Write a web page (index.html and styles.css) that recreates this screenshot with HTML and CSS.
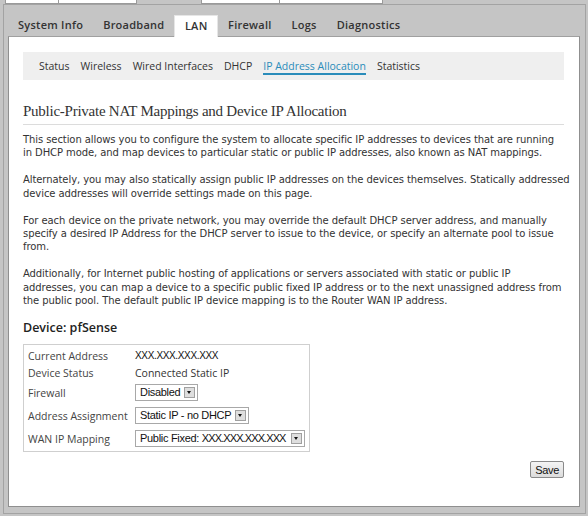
FILE: index.html
```html
<!DOCTYPE html>
<html>
<head>
<meta charset="utf-8">
<link rel="stylesheet" href="styles.css">
</head>
<body>
<div class="topstrip">
  <div class="cell c1"></div>
  <div class="cell c2"></div>
  <div class="gapcell"></div>
  <div class="cell c3"></div>
  <div class="cell c4"></div>
</div>
<div class="frame">
  <div class="tabs">
    <div class="tab">System Info</div>
    <div class="tab">Broadband</div>
    <div class="tab active">LAN</div>
    <div class="tab">Firewall</div>
    <div class="tab">Logs</div>
    <div class="tab">Diagnostics</div>
  </div>
  <div class="panel">
    <div class="subnav">
      <span class="sub">Status</span>
      <span class="sub">Wireless</span>
      <span class="sub">Wired Interfaces</span>
      <span class="sub">DHCP</span>
      <span class="sub current">IP Address Allocation</span>
      <span class="sub">Statistics</span>
    </div>
    <h1 class="title">Public-Private NAT Mappings and Device IP Allocation</h1>
    <div class="intro">
      <p class="para">This section allows you to configure the system to allocate specific IP addresses to devices that are running<br>in DHCP mode, and map devices to particular static or public IP addresses, also known as NAT mappings.</p>
      <p class="para">Alternately, you may also statically assign public IP addresses on the devices themselves. Statically addressed<br>device addresses will override settings made on this page.</p>
      <p class="para">For each device on the private network, you may override the default DHCP server address, and manually<br>specify a desired IP Address for the DHCP server to issue to the device, or specify an alternate pool to issue<br>from.</p>
      <p class="para">Additionally, for Internet public hosting of applications or servers associated with static or public IP<br>addresses, you can map a device to a specific public fixed IP address or to the next unassigned address from<br>the public pool. The default public IP device mapping is to the Router WAN IP address.</p>
    </div>
    <h2 class="device">Device: pfSense</h2>
    <div class="devbox">
      <div class="row r-text"><span class="label">Current Address</span><span class="value mono">XXX.XXX.XXX.XXX</span></div>
      <div class="row r-text"><span class="label">Device Status</span><span class="value">Connected Static IP</span></div>
      <div class="row r-sel"><span class="label">Firewall</span><span class="sel"><span class="seltext">Disabled</span><span class="arrow"></span></span></div>
      <div class="row r-sel"><span class="label">Address Assignment</span><span class="sel"><span class="seltext">Static IP - no DHCP</span><span class="arrow"></span></span></div>
      <div class="row r-sel"><span class="label">WAN IP Mapping</span><span class="sel"><span class="seltext">Public Fixed: <span class="mono">XXX.XXX.XXX.XXX</span></span><span class="arrow wide"></span></span></div>
    </div>
    <div class="actions"><button class="save">Save</button></div>
  </div>
</div>
</body>
</html>
```

FILE: styles.css
```css
html, body {
  margin: 0;
  padding: 0;
}
body {
  width: 588px;
  height: 516px;
  overflow: hidden;
  background: #c5c5c5;
  font-family: "Open Sans", sans-serif;
  color: #333;
}
.topstrip {
  display: flex;
  height: 4px;
  padding-left: 5px;
}
.cell {
  height: 3px;
  background: #fff;
  border: 1px solid #9a9a9a;
  border-top: none;
}
.c1 { width: 52px; }
.c2 { width: 77px; border-left: none; }
.gapcell { width: 64px; }
.c3 { width: 77px; }
.c4 { width: 102px; border-left: none; }
.frame {
  margin: 0 2px 0 3px;
  border: 1px solid #a3a3a3;
  background: #c5c5c5;
  padding: 0 5px 6px 4px;
  height: 502px;
}
.tabs {
  display: flex;
  align-items: flex-end;
  height: 31px;
}
.tab {
  font-size: 11px;
  font-weight: 600;
  color: #333;
  padding: 0 10px;
  height: 21px;
  line-height: 20px;
  letter-spacing: 0.25px;
  white-space: nowrap;
}
.tab.active {
  background: #fff;
  border: 1px solid #e6e6e6;
  border-bottom: none;
  padding: 0 9.5px;
  position: relative;
  z-index: 1;
  margin-bottom: -1px;
}
.panel {
  background: #fff;
  border: 1px solid #8f8f8f;
  border-top-color: #a0a0a0;
  height: 454px;
  padding: 15px 15px 0 14px;
}
.subnav {
  background: #efefef;
  height: 28px;
  display: flex;
  align-items: center;
  padding-left: 16px;
  gap: 11px;
  font-size: 10.5px;
  color: #333;
  white-space: nowrap;
}
.sub {
  line-height: 14px;
}
.sub.current {
  color: #2a8cba;
  border-bottom: 2px solid #2a8cba;
  margin-top: 3px;
  line-height: 13px;
}
.title {
  font-family: "Liberation Serif", serif;
  font-weight: normal;
  font-size: 15px;
  letter-spacing: -0.25px;
  color: #333;
  margin: 22px 0 0;
  padding-bottom: 4px;
  border-bottom: 1px solid #dcdcdc;
  line-height: 18px;
}
.intro {
  padding-top: 8px;
  display: flex;
  flex-direction: column;
  gap: 14px;
}
.para {
  font-family: "DejaVu Sans", sans-serif;
  font-size: 10px;
  line-height: 13.2px;
  margin: 0;
  color: #333;
  white-space: nowrap;
  letter-spacing: -0.08px;
}
.device {
  font-size: 12.5px;
  font-weight: 600;
  margin: 13px 0 8px;
  color: #222;
  line-height: 16px;
}
.devbox {
  width: 281px;
  border: 1px solid #cfcfcf;
  padding: 2px 0 1px 4px;
}
.row {
  display: flex;
  align-items: center;
  font-size: 10.5px;
  white-space: nowrap;
}
.r-text { height: 17px; }
.r-sel { height: 23px; }
.label {
  width: 107px;
  flex-shrink: 0;
  color: #444;
}
.value {
  color: #333;
}
.mono {
  font-family: "Liberation Sans", sans-serif;
  font-size: 10px;
  letter-spacing: -0.35px;
  color: #111;
}
.sel {
  display: inline-flex;
  align-items: center;
  flex-shrink: 0;
  height: 15px;
  border: 1px solid #a8a8a8;
  background: #fff;
  font-family: "Liberation Sans", sans-serif;
  font-size: 11px;
  letter-spacing: -0.3px;
  color: #111;
  padding-left: 4px;
  gap: 4px;
}
.seltext { line-height: 15px; }
.seltext .mono { font-size: 11px; letter-spacing: -0.9px; }
.arrow {
  width: 9px;
  height: 9px;
  border: 1px solid #a0a0a0;
  background: #dedede;
  margin-right: 2px;
  position: relative;
}
.arrow.wide { margin-left: 1px; margin-right: 2px; }
.arrow::after {
  content: "";
  position: absolute;
  left: 2px;
  top: 3px;
  border-left: 2.5px solid transparent;
  border-right: 2.5px solid transparent;
  border-top: 3px solid #111;
}
.actions {
  display: flex;
  justify-content: flex-end;
  margin-top: 9px;
}
.save {
  font-family: "Liberation Sans", sans-serif;
  font-size: 11px;
  color: #111;
  height: 17px;
  padding: 0 4px;
  border: 1px solid #8a8a8a;
  border-radius: 2px;
  background: linear-gradient(#f4f4f4, #dcdcdc);
  letter-spacing: -0.3px;
}
```
